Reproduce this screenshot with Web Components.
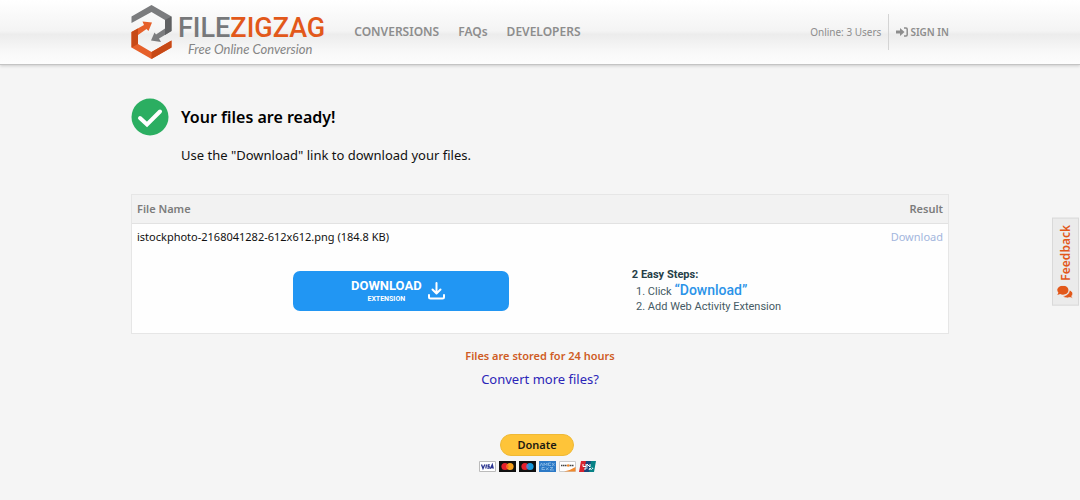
<!DOCTYPE html>
<html lang="en">
<head>
<meta charset="utf-8">
<meta name="viewport" content="width=device-width, initial-scale=1">
<title>FileZigZag - Free Online Conversion</title>
<style>
    body {
        margin: 0;
        min-height: 100vh;
        background-color: #f5f5f5;
        color: #111;
        font-family: "Noto Sans", "Open Sans", sans-serif;
        font-size: 12px;
        line-height: 16px;
        --orange: #e2581a;
        --gray: #8d8d8d;
        --page-width: 818px;
    }
</style>
</head>
<body>
<site-header>
    <zig-logo slot="logo"></zig-logo>
    <a slot="nav" href="#conversions">CONVERSIONS</a>
    <a slot="nav" href="#faqs">FAQs</a>
    <a slot="nav" href="#developers">DEVELOPERS</a>
    <span slot="status">Online: 3 Users</span>
</site-header>
<page-content>
    <ready-message>
        <span slot="title">Your files are ready!</span>
        Use the "Download" link to download your files.
    </ready-message>
    <file-results file-name="istockphoto-2168041282-612x612.png" size="184.8 KB"></file-results>
    <after-links></after-links>
    <donate-box></donate-box>
</page-content>
<feedback-tab>Feedback</feedback-tab>

<script>
function attach(element, html) {
    const template = document.createElement('template');
    template.innerHTML = html;
    element.attachShadow({ mode: 'open' }).appendChild(template.content.cloneNode(true));
}

class ZigLogo extends HTMLElement {
    constructor() {
        super();
        attach(this, `
            <style>
                :host { display: block; }
                a { display: flex; gap: 6px; color: #777; text-decoration: none; }
                svg { display: block; width: 41px; height: 54px; }
                .words { display: flex; flex-direction: column; padding-top: 9px; }
                .name {
                    font: 500 27px/28px Roboto, sans-serif;
                    color: #77787a;
                }
                .name b { font-weight: 500; color: var(--orange); }
                .tagline {
                    font: italic 13px/14px Lato, sans-serif;
                    padding-left: 10px;
                    color: #858585;
                }
            </style>
            <a href="#home">
                <svg viewBox="0 0 41 54" aria-hidden="true">
                    <path fill="#7b7c7e" d="M.5 11.500 20.500 0 40.500 11.500V26L28 33.500 30 37 20 35.500 23.500 27.500 25 29.500 34 23.500V15L20.500 7 .5 18Z"/>
                    <path fill="#5f6062" d="M34 15 40.500 11.500V26L34 30Z"/>
                    <path fill="#e6602a" d="M.5 27 13 20 11.500 16.500 21 17.500 17.500 26 15.500 24 7 30V39L20.500 47 40.500 35.500V42.500L20.500 54 .5 42.500Z"/>
                    <path fill="#c74916" d="M.5 27 7 23.500V39L.5 42.500ZM20.500 47 40.500 35.500V42.500L20.500 54Z"/>
                </svg>
                <span class="words">
                    <span class="name">FILE<b>ZIGZAG</b></span>
                    <span class="tagline">Free Online Conversion</span>
                </span>
            </a>
        `);
    }
}

class SiteHeader extends HTMLElement {
    constructor() {
        super();
        attach(this, `
            <style>
                :host {
                    display: block;
                    background: linear-gradient(#fff 0%, #f8f8f8 30%, #f4f4f4 48%, #ececec 54%, #f8f8f8 80%, #fdfdfd 100%);
                    border-bottom: 1px solid #c4c4c4;
                    box-shadow: 0 1px 3px #ccc;
                }
                header {
                    display: flex;
                    align-items: center;
                    box-sizing: border-box;
                    max-width: var(--page-width);
                    min-height: 64px;
                    margin: 0 auto;
                }
                nav { display: flex; gap: 19px; margin-left: 29px; }
                ::slotted(a) {
                    color: var(--gray);
                    font-size: 12px;
                    font-weight: 600;
                    text-decoration: none;
                }
                .account {
                    display: flex;
                    align-items: center;
                    gap: 7px;
                    margin-left: auto;
                    color: var(--gray);
                    font-size: 10px;
                }
                .sign-in {
                    display: flex;
                    align-items: center;
                    gap: 2px;
                    padding: 10px 0 10px 7px;
                    border-left: 1px solid #d4d4d4;
                    color: var(--gray);
                    font-size: 10px;
                    font-weight: 600;
                    text-decoration: none;
                }
                svg { width: 12px; height: 10px; }
            </style>
            <header>
                <slot name="logo"></slot>
                <nav><slot name="nav"></slot></nav>
                <div class="account">
                    <slot name="status"></slot>
                    <a class="sign-in" href="#signin">
                        <svg viewBox="0 0 12 10" aria-hidden="true">
                            <path fill="#8d8d8d" d="M0 3.500H4V1L8.500 5 4 9V6.500H0Z"/>
                            <path fill="none" stroke="#8d8d8d" stroke-width="1.500" d="M8 1H10Q11.200 1 11.200 2.200V7.800Q11.200 9 10 9H8"/>
                        </svg>
                        SIGN IN
                    </a>
                </div>
            </header>
        `);
    }
}

class PageContent extends HTMLElement {
    constructor() {
        super();
        attach(this, `
            <style>
                :host { display: block; max-width: var(--page-width); margin: 0 auto; }
                main { display: flex; flex-direction: column; padding: 33px 0 24px; }
            </style>
            <main><slot></slot></main>
        `);
    }
}

class ReadyMessage extends HTMLElement {
    constructor() {
        super();
        attach(this, `
            <style>
                :host { display: flex; gap: 12px; margin-bottom: 29px; }
                svg { flex: none; width: 38px; height: 38px; }
                h1 { margin: 7px 0 16px; font-size: 16px; line-height: 24px; font-weight: 600; color: #000; }
                p { margin: 0; font-size: 13px; line-height: 20px; }
            </style>
            <svg viewBox="0 0 38 38" aria-hidden="true">
                <circle cx="19" cy="19" r="18.500" fill="#2bae61"/>
                <path d="M9 20 16 26.500 29 13.500" fill="none" stroke="#fff" stroke-width="4" stroke-linecap="round"/>
            </svg>
            <div>
                <h1><slot name="title"></slot></h1>
                <p><slot></slot></p>
            </div>
        `);
    }
}

class FileResults extends HTMLElement {
    constructor() {
        super();
        attach(this, `
            <style>
                :host { display: block; }
                table {
                    width: 100%;
                    border: 1px solid #e6e6e6;
                    border-spacing: 0;
                    background-color: #fefefe;
                    font-size: 11px;
                }
                th {
                    padding: 6px 5px;
                    border-bottom: 1px solid #e2e2e2;
                    background-color: #f2f2f2;
                    color: #7c7c7c;
                    font-weight: 600;
                    text-align: left;
                }
                td { padding: 5px 5px 4px; font-size: 11px; }
                th:last-child, .result { text-align: right; }
                .result a { color: #a3b6dd; text-decoration: none; }
                .promo { padding: 18px 11px 18px 5px; }
            </style>
            <table>
                <thead>
                    <tr><th scope="col">File Name</th><th scope="col">Result</th></tr>
                </thead>
                <tbody>
                    <tr>
                        <td class="file"></td>
                        <td class="result"><a href="#download">Download</a></td>
                    </tr>
                    <tr><td class="promo" colspan="2"><extension-promo></extension-promo></td></tr>
                </tbody>
            </table>
        `);
    }

    connectedCallback() {
        const name = this.getAttribute('file-name');
        const size = this.getAttribute('size');
        this.shadowRoot.querySelector('.file').textContent = `${name} (${size})`;
    }
}

class ExtensionPromo extends HTMLElement {
    constructor() {
        super();
        attach(this, `
            <style>
                :host {
                    display: flex;
                    justify-content: center;
                    align-items: center;
                    gap: 123px;
                    font-family: Roboto, sans-serif;
                }
                button {
                    display: flex;
                    justify-content: center;
                    align-items: center;
                    gap: 6px;
                    width: 216px;
                    min-height: 40px;
                    margin: 4px 0;
                    padding: 0 6px 0 0;
                    border: 0;
                    border-radius: 7px;
                    background-color: #2196f3;
                    color: #fff;
                    font: bold 13px/16px Roboto, sans-serif;
                }
                small { display: block; font-size: 7px; line-height: 10px; }
                svg { width: 17px; height: 18px; }
                .steps { color: #455a64; font-size: 11px; line-height: 14px; }
                h2 { margin: 0; color: #263f48; font-size: 11px; line-height: 14px; }
                ol { margin: 0; padding-left: 16px; }
                li:first-child { line-height: 16px; }
                b { color: #2b93e8; font-size: 14px; font-weight: 500; }
            </style>
            <button type="button">
                <span>DOWNLOAD<small>EXTENSION</small></span>
                <svg viewBox="0 0 17 18" aria-hidden="true" fill="none" stroke="#fff" stroke-width="2" stroke-linecap="round" stroke-linejoin="round">
                    <path d="M8.500 1V11M4.500 7.500 8.500 11.500 12.500 7.500M1 13V15Q1 16.500 2.500 16.500H14.500Q16 16.500 16 15V13"/>
                </svg>
            </button>
            <div class="steps">
                <h2>2 Easy Steps:</h2>
                <ol>
                    <li>Click <b>“Download”</b></li>
                    <li>Add Web Activity Extension</li>
                </ol>
            </div>
        `);
    }
}

class AfterLinks extends HTMLElement {
    constructor() {
        super();
        attach(this, `
            <style>
                :host { display: block; margin-top: 14px; text-align: center; }
                p { margin: 0; color: #cf5c25; font-size: 11px; font-weight: 600; }
                a { display: inline-block; margin-top: 7px; color: #2b25b8; font-size: 13px; text-decoration: none; }
            </style>
            <p>Files are stored for 24 hours</p>
            <a href="#convert">Convert more files?</a>
        `);
    }
}

class DonateBox extends HTMLElement {
    constructor() {
        super();
        attach(this, `
            <style>
                :host { display: flex; flex-direction: column; align-items: center; gap: 5px; margin-top: 46px; padding-right: 6px; }
                button {
                    min-width: 74px;
                    padding: 2px 12px;
                    border: 1px solid #efb936;
                    border-radius: 11px;
                    background-color: #fec439;
                    color: #1d1a12;
                    font: 600 11px/16px "Noto Sans", sans-serif;
                }
                .cards { display: flex; gap: 3px; }
                svg { width: 17px; height: 11px; }
            </style>
            <button type="button">Donate</button>
            <div class="cards">
                <svg viewBox="0 0 17 11" role="img" aria-label="Visa">
                    <path fill="#fff" stroke="#bbb" d="M.5.5H16.500V10.500H.5Z"/>
                    <path fill="none" stroke="#2b3590" stroke-width="1.300" d="M2.500 3.500 4 7.500 5.800 3.500M7.500 3.500 6.800 7.500M10.800 3.900H9.300L9 5.200 10.300 5.800 10 7.200H8.200M11.300 7.700 13.300 3.700 14.300 7.700M12 6.500H14"/>
                </svg>
                <svg viewBox="0 0 17 11" role="img" aria-label="Mastercard">
                    <path fill="#111" d="M0 0H17V11H0Z"/>
                    <circle cx="6" cy="5.500" r="3.600" fill="#e6202c"/>
                    <circle cx="11" cy="5.500" r="3.600" fill="#f6a01c"/>
                    <path fill="#ff6524" d="M8.500 3Q10.600 5.500 8.500 8 6.400 5.500 8.500 3Z"/>
                </svg>
                <svg viewBox="0 0 17 11" role="img" aria-label="Maestro">
                    <path fill="#111" d="M0 0H17V11H0Z"/>
                    <circle cx="6" cy="5.500" r="3.600" fill="#e6202c"/>
                    <circle cx="11" cy="5.500" r="3.600" fill="#1698dc"/>
                    <path fill="#7474be" d="M8.500 3Q10.600 5.500 8.500 8 6.400 5.500 8.500 3Z"/>
                </svg>
                <svg viewBox="0 0 17 11" role="img" aria-label="American Express">
                    <path fill="#2c79c6" d="M0 0H17V11H0Z"/>
                    <path fill="none" stroke="#8fbfe8" stroke-width=".8" d="M1 5 2.500 2 4 5M5 5V2L6.500 4 8 2V5M12 2H9.500V4.500H12M13 2 15.500 5M15.500 2 13 5M3 9V6.500H5.500M3 8.500H6M7 6.500 9.500 9M9.500 6.500 7 9M11 6.500H14L11 9H15"/>
                </svg>
                <svg viewBox="0 0 17 11" role="img" aria-label="Discover">
                    <path fill="#fff" stroke="#ccc" d="M.5.5H16.500V10.500H.5Z"/>
                    <path fill="#f28a2c" d="M5 10.500Q12 9 16.500 6V10.500Z"/>
                    <path stroke="#444" stroke-width="1.500" stroke-dasharray="1.500 .5" d="M2 4.500H8M10.500 4.500H15"/>
                    <circle cx="9.200" cy="4.500" r="1.300" fill="#f28a2c"/>
                </svg>
                <svg viewBox="0 0 17 11" role="img" aria-label="UnionPay">
                    <path fill="#d8232e" d="M2 0H8L6 11H0Z"/>
                    <path fill="#19477c" d="M7 0H13L11 11H5Z"/>
                    <path fill="#078286" d="M12 0H17L15 11H10Z"/>
                    <path fill="none" stroke="#fff" d="M4 3V5.500H7V3M8 6V3L11 6V3M6 9V7H8.500M10 9 11 7 12.500 9M13 6.500 14 8"/>
                </svg>
            </div>
        `);
    }
}

class FeedbackTab extends HTMLElement {
    constructor() {
        super();
        attach(this, `
            <style>
                /* stays on the window edge, over the page */
                :host { display: block; position: fixed; top: 218px; right: 1px; }
                button {
                    display: flex;
                    align-items: center;
                    gap: 5px;
                    padding: 6px 4px 6px 5px;
                    border: 1px solid #d9d9d9;
                    background-color: #ebebeb;
                    color: var(--orange);
                    font: 600 12px/15px "Noto Sans", sans-serif;
                    writing-mode: vertical-rl;
                    transform: rotate(180deg);
                }
                svg { width: 16px; height: 13px; transform: rotate(180deg); }
            </style>
            <button type="button">
                <svg viewBox="0 0 16 13" aria-hidden="true">
                    <path fill="#e2581a" d="M6 0C9.300 0 11.500 2 11.500 4.600S9 9 6 9C5 9 4 8.800 3.200 8.400L.3 9.300 1.400 7C-1.500 3.800 1.600 0 6 0Z"/>
                    <path fill="#e2581a" stroke="#ebebeb" stroke-width=".8" d="M12.300 4.500C16 5.500 16.600 8.500 14.700 10.400L15.700 12.600 12.800 11.900C10 13 7 12 6 10 9.500 10 12.300 8 12.300 4.500Z"/>
                </svg>
                <slot></slot>
            </button>
        `);
    }
}

customElements.define('zig-logo', ZigLogo);
customElements.define('site-header', SiteHeader);
customElements.define('page-content', PageContent);
customElements.define('ready-message', ReadyMessage);
customElements.define('extension-promo', ExtensionPromo);
customElements.define('file-results', FileResults);
customElements.define('after-links', AfterLinks);
customElements.define('donate-box', DonateBox);
customElements.define('feedback-tab', FeedbackTab);
</script>
</body>
</html>
